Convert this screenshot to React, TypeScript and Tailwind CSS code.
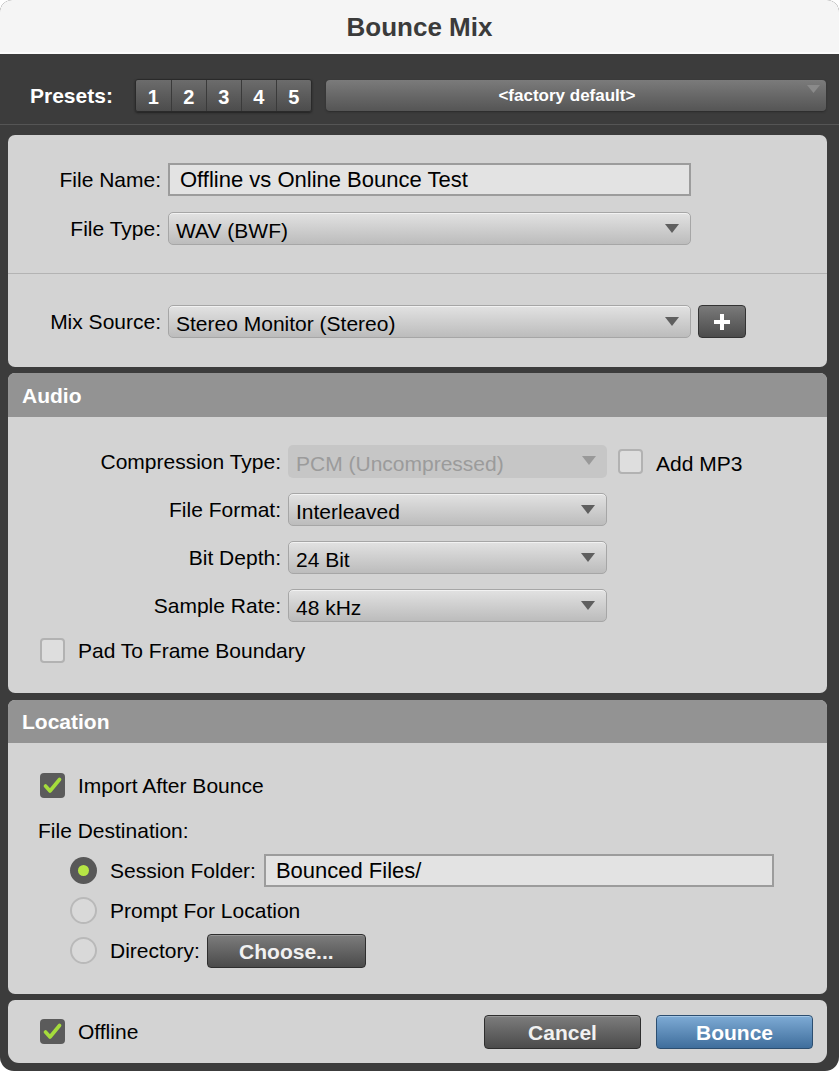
import React from 'react';

// Bounce Mix dialog

const Arrow = ({ color = '#5f5f5f' }: { color?: string }) => (
  <svg width="14" height="9" viewBox="0 0 14 9" className="absolute right-[11px] top-[11px]">
    <polygon points="0,0 14,0 7,9" fill={color} />
  </svg>
);

const Dropdown = ({ text, width, disabled }: { text: string; width: string; disabled?: boolean }) => {
  if (disabled) {
    return (
      <div className={`relative flex h-[33px] items-center rounded-[5px] bg-[#c6c6c6] pl-[8px] text-[21px] leading-none text-[#9b9b9b] ${width}`}>
        <span className="pt-[3px]">{text}</span>
        <Arrow color="#999999" />
      </div>
    );
  }
  return (
    <div
      className={`relative flex h-[33px] items-center rounded-[5px] border border-[#a6a6a6] bg-gradient-to-b from-[#e2e2e2] to-[#bcbcbc] pl-[7px] text-[21px] leading-none text-black shadow-[inset_0_1px_0_#f2f2f2] ${width}`}
    >
      <span className="pt-[3px]">{text}</span>
      <Arrow />
    </div>
  );
};

const TextBox = ({ text, width }: { text: string; width: string }) => (
  <div className={`flex h-[33px] items-center border-2 border-[#9c9c9c] bg-[#e3e3e3] pl-[10px] text-[22px] leading-none text-black ${width}`}>
    <span className="pt-[1px]">{text}</span>
  </div>
);

const Checkbox = ({ checked }: { checked?: boolean }) =>
  checked ? (
    <div className="flex h-[25px] w-[25px] shrink-0 items-center justify-center rounded-[4px] bg-[#5b5b5b]">
      <svg width="19" height="17" viewBox="0 0 19 17">
        <polyline points="2.5,9 7,14 16.5,2.5" fill="none" stroke="#a5dc3c" strokeWidth="3.6" strokeLinecap="round" strokeLinejoin="round" />
      </svg>
    </div>
  ) : (
    <div className="h-[25px] w-[25px] shrink-0 rounded-[4px] border-2 border-[#b2b2b2] bg-[#dedede]" />
  );

const Radio = ({ selected }: { selected?: boolean }) =>
  selected ? (
    <div className="flex h-[27px] w-[27px] shrink-0 items-center justify-center rounded-full bg-[#585858]">
      <div className="h-[11px] w-[11px] rounded-full bg-[#b6e545]" />
    </div>
  ) : (
    <div className="h-[27px] w-[27px] shrink-0 rounded-full border-2 border-[#b9b9b9] bg-[#d9d9d9]" />
  );

const DarkButton = ({ text, width }: { text: string; width: string }) => (
  <div
    className={`flex h-[34px] items-center justify-center rounded-[4px] border border-[#2e2e2e] bg-gradient-to-b from-[#7d7d7d] to-[#4b4b4b] text-[21px] font-bold leading-none text-[#f1f1f1] shadow-[inset_0_1px_0_#949494] ${width}`}
  >
    <span className="pt-[2px]">{text}</span>
  </div>
);

const Label = ({ text, width }: { text: string; width: string }) => (
  <span className={`text-right text-[21px] leading-none text-black ${width}`}>{text}</span>
);

export default function App() {
  return (
    <div className="h-[1071px] w-[839px] bg-white font-['Liberation_Sans',Arial,sans-serif]">
      <div className="flex h-full w-full flex-col overflow-hidden rounded-t-[12px] rounded-b-[14px] bg-[#3c3c3c]">
        {/* title bar */}
        <div className="flex h-[54px] shrink-0 items-center justify-center border-b-2 border-[#fbfbfb] bg-[#f5f5f5]">
          <span className="pt-[1px] text-[26px] font-bold leading-none text-[#3b3b3b]">Bounce Mix</span>
        </div>

        {/* presets */}
        <div className="flex h-[71px] shrink-0 items-center border-b border-[#555555] pl-[30px] pr-[13px] pt-[12px]">
          <span className="text-[21px] font-bold leading-none text-white">Presets:</span>
          <div className="ml-[22px] flex h-[33px] overflow-hidden rounded-[3px] border border-[#2a2a2a] shadow-[0_1px_2px_#222]">
            {['1', '2', '3', '4', '5'].map((n, i) => (
              <div
                key={n}
                className={`flex h-full w-[35px] items-center justify-center bg-gradient-to-b from-[#6c6c6c] to-[#4c4c4c] text-[20px] font-bold leading-none text-white ${i > 0 ? 'border-l border-[#3a3a3a]' : ''}`}
              >
                <span className="pt-[3px]">{n}</span>
              </div>
            ))}
          </div>
          <div className="relative ml-[14px] flex h-[31px] flex-1 items-center justify-center rounded-[4px] bg-gradient-to-b from-[#7b7b7b] to-[#555555] pr-[18px] shadow-[0_1px_2px_#2a2a2a]">
            <span className="text-[17px] font-bold leading-none text-white">&lt;factory default&gt;</span>
            <svg width="13" height="8" viewBox="0 0 13 8" className="absolute right-[6px] top-[5px]">
              <polygon points="0,0 13,0 6.5,8" fill="#8a8a8a" />
            </svg>
          </div>
        </div>

        <div className="ml-[8px] mt-[10px] flex w-[819px] flex-col">
          {/* file panel */}
          <div className="rounded-[7px] bg-[#d3d3d3]">
            <div className="flex flex-col gap-[16px] pb-[28px] pt-[28px]">
              <div className="flex h-[33px] items-center">
                <Label text="File Name:" width="w-[153px]" />
                <div className="ml-[7px]">
                  <TextBox text="Offline vs Online Bounce Test" width="w-[523px]" />
                </div>
              </div>
              <div className="flex h-[33px] items-center">
                <Label text="File Type:" width="w-[153px]" />
                <div className="ml-[7px]">
                  <Dropdown text="WAV (BWF)" width="w-[523px]" />
                </div>
              </div>
            </div>
            <div className="h-[1px] bg-[#b3b3b3]" />
            <div className="flex h-[93px] items-center pt-[2px]">
              <Label text="Mix Source:" width="w-[153px]" />
              <div className="ml-[7px]">
                <Dropdown text="Stereo Monitor (Stereo)" width="w-[523px]" />
              </div>
              <div className="ml-[7px] flex h-[33px] w-[48px] items-center justify-center rounded-[4px] border border-[#333333] bg-gradient-to-b from-[#7a7a7a] to-[#4c4c4c]">
                <svg width="16" height="16" viewBox="0 0 16 16">
                  <rect x="6" y="0" width="4" height="16" fill="#ffffff" />
                  <rect x="0" y="6" width="16" height="4" fill="#ffffff" />
                </svg>
              </div>
            </div>
          </div>

          {/* audio panel */}
          <div className="mt-[6px] overflow-hidden rounded-[7px] bg-[#d3d3d3]">
            <div className="flex h-[44px] items-center bg-[#939393] pl-[14px]">
              <span className="text-[21px] font-bold leading-none text-white">Audio</span>
            </div>
            <div className="flex flex-col pb-[30px] pt-[28px]">
              <div className="flex flex-col gap-[15px]">
                <div className="flex h-[33px] items-center">
                  <Label text="Compression Type:" width="w-[273px]" />
                  <div className="ml-[7px]">
                    <Dropdown text="PCM (Uncompressed)" width="w-[319px]" disabled />
                  </div>
                  <div className="ml-[11px]">
                    <Checkbox />
                  </div>
                  <span className="ml-[13px] pt-[3px] text-[21px] leading-none text-black">Add MP3</span>
                </div>
                {[
                  ['File Format:', 'Interleaved'],
                  ['Bit Depth:', '24 Bit'],
                  ['Sample Rate:', '48 kHz'],
                ].map(([label, value]) => (
                  <div key={label} className="flex h-[33px] items-center">
                    <Label text={label} width="w-[273px]" />
                    <div className="ml-[7px]">
                      <Dropdown text={value} width="w-[319px]" />
                    </div>
                  </div>
                ))}
              </div>
              <div className="mt-[16px] flex h-[25px] items-center pl-[32px]">
                <Checkbox />
                <span className="ml-[13px] text-[21px] leading-none text-black">Pad To Frame Boundary</span>
              </div>
            </div>
          </div>

          {/* location panel */}
          <div className="mt-[7px] overflow-hidden rounded-[7px] bg-[#d3d3d3]">
            <div className="flex h-[43px] items-center bg-[#939393] pl-[14px]">
              <span className="text-[21px] font-bold leading-none text-white">Location</span>
            </div>
            <div className="flex flex-col pb-[27px] pt-[30px]">
              <div className="flex h-[25px] items-center pl-[32px]">
                <Checkbox checked />
                <span className="ml-[13px] text-[21px] leading-none text-black">Import After Bounce</span>
              </div>
              <div className="mt-[20px] flex h-[24px] items-center pl-[30px] text-[21px] leading-none text-black">File Destination:</div>
              <div className="mt-[12px] flex h-[33px] items-center pl-[62px]">
                <Radio selected />
                <span className="ml-[13px] text-[21px] leading-none text-black">Session Folder:</span>
                <div className="ml-[8px]">
                  <TextBox text="Bounced Files/" width="w-[510px]" />
                </div>
              </div>
              <div className="mt-[10px] flex h-[27px] items-center pl-[62px]">
                <Radio />
                <span className="ml-[13px] text-[21px] leading-none text-black">Prompt For Location</span>
              </div>
              <div className="mt-[10px] flex h-[33px] items-center pl-[62px]">
                <Radio />
                <span className="ml-[13px] text-[21px] leading-none text-black">Directory:</span>
                <div className="ml-[7px]">
                  <DarkButton text="Choose..." width="w-[159px]" />
                </div>
              </div>
            </div>
          </div>

          {/* footer */}
          <div className="mt-[6px] flex h-[63px] items-center rounded-t-[7px] rounded-b-[11px] bg-[#d3d3d3] pl-[32px] pr-[14px]">
            <Checkbox checked />
            <span className="ml-[13px] text-[21px] leading-none text-black">Offline</span>
            <div className="ml-auto flex items-center gap-[15px]">
              <DarkButton text="Cancel" width="w-[157px]" />
              <div className="flex h-[34px] w-[157px] items-center justify-center rounded-[4px] border border-[#2c4e70] bg-gradient-to-b from-[#7eabd5] to-[#3f6e9c] text-[21px] font-bold leading-none text-white shadow-[inset_0_1px_0_#a3c6e6]">
                <span className="pt-[2px]">Bounce</span>
              </div>
            </div>
          </div>
        </div>
      </div>
    </div>
  );
}
